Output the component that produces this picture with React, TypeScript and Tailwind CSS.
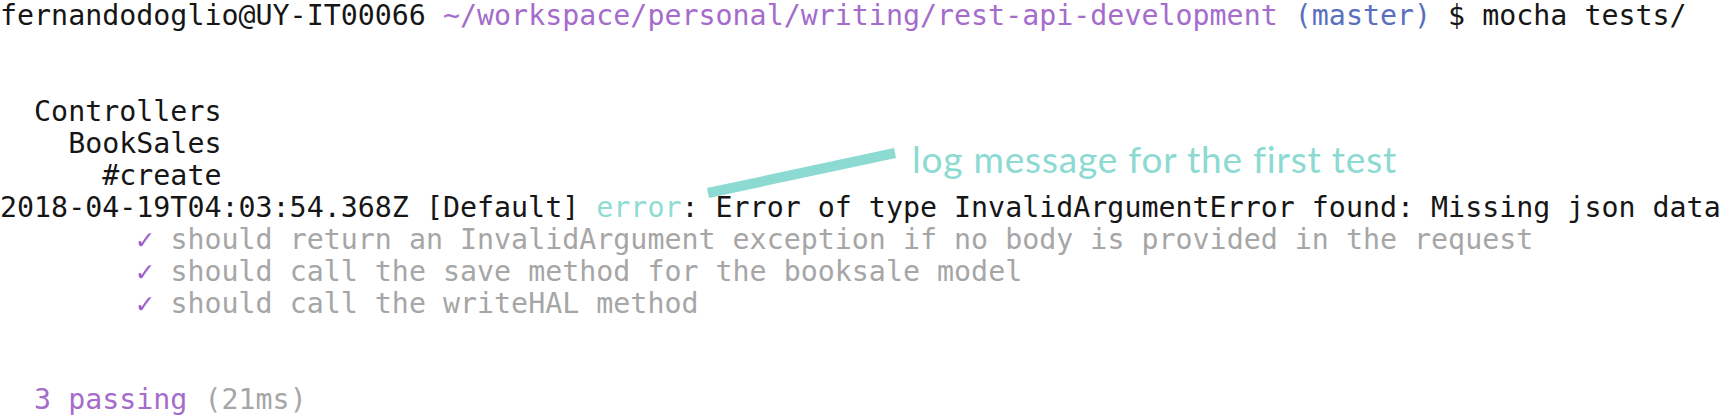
const Line = ({ children }: { children?: React.ReactNode }) => (
  <div className="h-[32px]">{children ?? " "}</div>
)

const tests = [
  "should return an InvalidArgument exception if no body is provided in the request",
  "should call the save method for the booksale model",
  "should call the writeHAL method",
]

export default function App() {
  return (
    <div className="relative w-[1727px] h-[419px] overflow-hidden bg-white">
      <div className="whitespace-pre font-['DejaVu_Sans_Mono',monospace] text-[28.3px] leading-[32px] text-[#161616]">
        <Line>
          fernandodoglio@UY-IT00066{" "}
          <span className="text-[#a56ccb]">~/workspace/personal/writing/rest-api-development</span>{" "}
          <span className="text-[#5a70bd]">(master)</span> $ mocha tests/
        </Line>
        <Line />
        <Line />
        <Line>{"  Controllers"}</Line>
        <Line>{"    BookSales"}</Line>
        <Line>{"      #create"}</Line>
        <Line>
          2018-04-19T04:03:54.368Z [Default] <span className="text-[#8fdcd3]">error</span>: Error of type
          InvalidArgumentError found: Missing json data
        </Line>
        {tests.map((t) => (
          <Line key={t}>
            {"        "}
            <span className="text-[#9c5fc9]">✓</span> <span className="text-[#a6a6a6]">{t}</span>
          </Line>
        ))}
        <Line />
        <Line />
        <Line>
          {"  "}
          <span className="text-[#a56ccb]">3 passing</span> <span className="text-[#a6a6a6]">(21ms)</span>
        </Line>
      </div>

      {/* callout */}
      <svg className="absolute left-[700px] top-[145px]" width="204" height="56" viewBox="0 0 204 56">
        <line x1="8" y1="48" x2="195" y2="8" stroke="#8cdad1" strokeWidth="10" />
      </svg>
      <div className="absolute left-[912px] top-[140px] whitespace-pre font-['Lato',sans-serif] text-[37px] tracking-[0.8px] leading-none text-[#8cdad1]">
        log message for the first test
      </div>
    </div>
  )
}
